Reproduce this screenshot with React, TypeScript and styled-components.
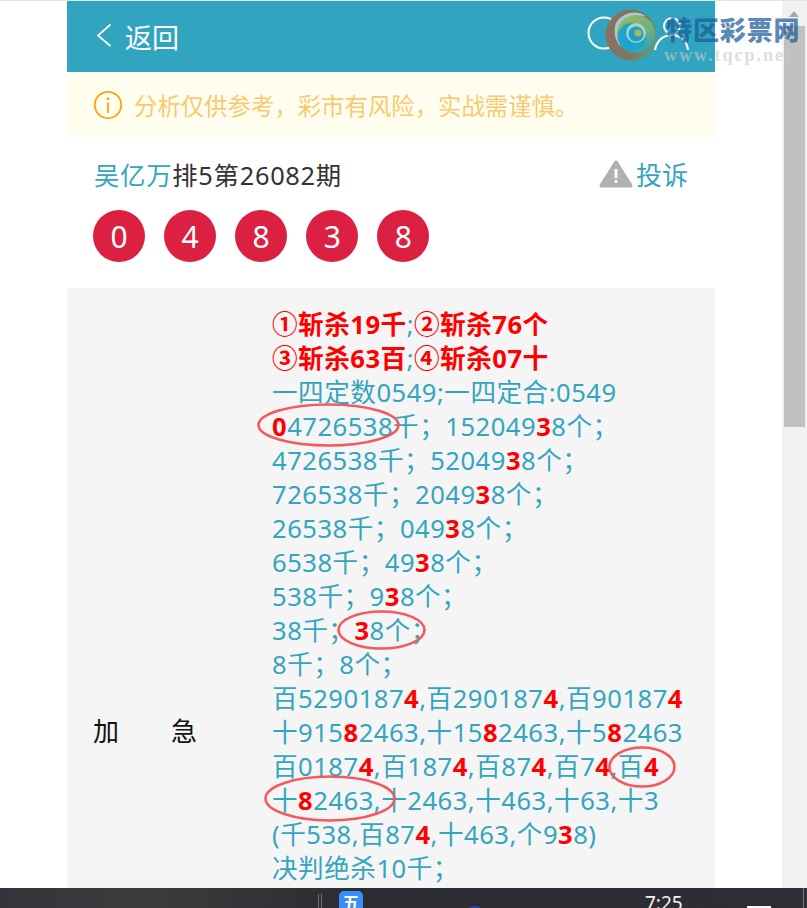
import React from "react";
import styled, { createGlobalStyle } from "styled-components";

const GlobalStyle = createGlobalStyle`
  html, body {
    margin: 0;
    padding: 0;
    background: #fff;
    overflow: hidden;
  }
  * {
    box-sizing: border-box;
  }
`;

const Screen = styled.div`
  position: relative;
  width: 807px;
  height: 908px;
  display: flex;
  flex-direction: column;
  overflow: hidden;
  font-family: "Noto Sans", "Noto Sans CJK SC", sans-serif;
  background: #fff;
`;

const Viewport = styled.div`
  flex: 1;
  min-height: 0;
  display: flex;
  justify-content: space-between;
  padding-left: 67px;
  border-top: 1px solid #e4e4e4;
`;

const Page = styled.main`
  width: 648px;
  display: flex;
  flex-direction: column;
`;

const Header = styled.header`
  height: 71px;
  flex: none;
  display: flex;
  align-items: center;
  background: #31a5bf;
  color: #fff;
  padding: 0 0 0 29px;
`;

const BackLink = styled.a`
  display: flex;
  align-items: center;
  gap: 13px;
  font-size: 27px;
  color: #fff;
`;

const BackGlyph = styled.svg`
  margin-top: -3px;
`;

const HeaderIcons = styled.svg`
  margin-left: auto;
  margin-right: 26px;
`;

const Notice = styled.div`
  height: 65px;
  flex: none;
  display: flex;
  align-items: center;
  gap: 11px;
  padding-left: 26px;
  background: #fffeee;
  color: #fbc872;
  font-size: 23.4px;
`;

const TitleRow = styled.div`
  display: flex;
  align-items: center;
  justify-content: space-between;
  height: 76px;
  flex: none;
  padding: 0 27px 3px 27px;
  font-size: 25.4px;
  letter-spacing: 0.7px;
  color: #333;
`;

const Author = styled.span`
  color: #34a5be;
`;

const Complaint = styled.a`
  display: flex;
  align-items: center;
  gap: 3px;
  color: #34a5be;
  font-size: 26px;
  letter-spacing: 0;
`;

const Balls = styled.div`
  display: flex;
  gap: 19.1px;
  padding-left: 26px;
  margin-top: -3px;
  flex: none;
`;

const Ball = styled.span`
  width: 52px;
  height: 52px;
  border-radius: 50%;
  display: flex;
  align-items: center;
  justify-content: center;
  background: #db2042;
  color: #fff;
  font-size: 30px;
`;

const Panel = styled.section`
  flex: none;
  height: 888px;
  margin-top: 26px;
  display: flex;
  align-items: center;
  background: #f5f5f5;
  padding-left: 26px;
`;

const Label = styled.div`
  width: 179px;
  flex: none;
  margin-top: -4px;
  font-size: 26px;
  color: #111;
  white-space: pre;
`;

const Lines = styled.div`
  align-self: flex-start;
  padding-top: 20px;
  font-size: 25.6px;
  letter-spacing: 0.5px;
  line-height: 34px;
  color: #34a5be;
`;

const Line = styled.div`
  white-space: nowrap;
`;

const Hot = styled.b`
  color: #f00;
  font-weight: 700;
`;

const Scrollbar = styled.div`
  width: 25px;
  flex: none;
  position: relative;
  background: #f1f1f1;
  padding: 25px 2px 0;
`;

const ScrollArrow = styled.span`
  position: absolute;
  left: 7px;
  top: 10px;
  border-left: 5.5px solid transparent;
  border-right: 5.5px solid transparent;
  border-bottom: 6px solid #a8a8a8;
`;

const ScrollThumb = styled.div`
  height: 401px;
  background: #c1c1c1;
`;

const Taskbar = styled.footer`
  position: relative;
  height: 20px;
  flex: none;
  display: flex;
  overflow: hidden;
  background: linear-gradient(90deg, #33353a 0%, #3a3c3d 18%, #2b2c31 45%, #2e2f34 100%);
  color: #fff;
  font-size: 19px;
`;

const TrayDivider = styled.span`
  width: 4px;
  height: 14px;
  margin: 6px 0 0 318px;
  border-left: 1px solid #6d6e72;
  border-right: 1px solid #6d6e72;
`;

const AppTile = styled.span`
  width: 24px;
  height: 24px;
  margin: 3px 0 0 17px;
  border-radius: 5px;
  background: #3a8cfa;
  color: #fff;
  font-size: 17px;
  font-weight: 700;
  line-height: 24px;
  text-align: center;
`;

const TrayDot = styled.span`
  width: 20px;
  height: 20px;
  margin: 18px 0 0 102px;
  border-radius: 50%;
  background: #1b45c8;
`;

const Clock = styled.span`
  margin: 3px 0 0 160px;
  line-height: 24px;
  color: #f3f3f3;
`;

const TrayBox = styled.span`
  width: 24px;
  height: 10px;
  margin: 18px 0 0 64px;
  background: #f5f5f5;
`;

const TrayEdge = styled.span`
  width: 1px;
  margin-left: auto;
  margin-right: 3px;
  background: #77787c;
`;

const Watermark = styled.div`
  position: absolute;
  left: 605px;
  top: 9px;
  display: flex;
  pointer-events: none;
`;

const WatermarkText = styled.div`
  margin: 5px 0 0 9px;
  font-family: "Noto Sans CJK SC", sans-serif;
`;

const WatermarkTitle = styled.div`
  font-size: 26px;
  line-height: 30px;
  font-weight: 900;
  letter-spacing: 0.9px;
  color: rgba(26, 92, 150, 0.72);
`;

const WatermarkUrl = styled.div`
  margin: 1px 0 0 -2px;
  font-family: "Liberation Serif", serif;
  font-size: 18px;
  line-height: 20px;
  font-weight: 700;
  letter-spacing: 2px;
  color: rgba(200, 200, 200, 0.62);
`;

const Mark = styled.svg<{ $left: number; $top: number }>`
  position: absolute;
  left: ${(p) => p.$left}px;
  top: ${(p) => p.$top}px;
  pointer-events: none;
`;

const Ellipse = ({ left, top, w, h }: { left: number; top: number; w: number; h: number }) => (
  <Mark $left={left} $top={top} width={w} height={h} viewBox={`0 0 ${w} ${h}`}>
    <ellipse cx={w / 2} cy={h / 2} rx={w / 2 - 1.5} ry={h / 2 - 1.5} fill="none" stroke="#f25a5f" strokeWidth="2.6" />
  </Mark>
);

const Swirl = () => (
  <svg width="52" height="52" viewBox="0 0 52 52">
    <defs>
      <linearGradient id="base" x1="0" y1="0.3" x2="1" y2="0.7">
        <stop offset="0" stopColor="#8f6f64" />
        <stop offset="0.6" stopColor="#7b7662" />
        <stop offset="1" stopColor="#6f9a5c" />
      </linearGradient>
      <linearGradient id="band" x1="0.3" y1="0" x2="0.7" y2="1">
        <stop offset="0" stopColor="#94b95a" />
        <stop offset="0.55" stopColor="#6cae86" />
        <stop offset="1" stopColor="#2f9fc0" />
      </linearGradient>
    </defs>
    <circle cx="26" cy="26" r="25.5" fill="url(#base)" />
    <path d="M11 14C18 3 32 0 42 8 36 5 24 7 18 16 14 22 13 30 16 38 10 32 8 22 11 14Z" fill="#a4ccd0" />
    <circle cx="31" cy="25" r="19" fill="url(#band)" />
    <circle cx="27" cy="28" r="14" fill="#1ca3cf" />
    <circle cx="31" cy="24" r="10" fill="#a8d0b8" />
    <circle cx="31" cy="25" r="7.5" fill="#1f9fca" />
    <circle cx="33" cy="24" r="3.6" fill="#a9b85a" />
  </svg>
);

export default function App() {
  return (
    <Screen>
      <GlobalStyle />
      <Viewport>
        <Page>
          <Header>
            <BackLink>
              <BackGlyph width="16" height="24" viewBox="0 0 16 24">
                <path d="M14.5 1.5 2 12.5 14.5 23" fill="none" stroke="#fff" strokeWidth="1.7" />
              </BackGlyph>
              返回
            </BackLink>
            <HeaderIcons width="102" height="50" viewBox="0 0 102 50">
              <circle cx="17" cy="21" r="15.5" fill="none" stroke="#fff" strokeWidth="2" />
              <circle cx="85" cy="14" r="8" fill="none" stroke="#fff" strokeWidth="2" />
              <path d="M68 38C70 27 78 23 85 23 93 23 100 29 101 38" fill="none" stroke="#fff" strokeWidth="2" />
            </HeaderIcons>
          </Header>
          <Notice>
            <svg width="30" height="30" viewBox="0 0 30 30">
              <circle cx="15" cy="15" r="13.2" fill="none" stroke="#faa60f" strokeWidth="1.8" />
              <circle cx="15" cy="8.8" r="1.4" fill="#faa60f" />
              <rect x="14.1" y="12.5" width="1.8" height="10.5" fill="#faa60f" />
            </svg>
            分析仅供参考，彩市有风险，实战需谨慎。
          </Notice>
          <TitleRow>
            <span>
              <Author>吴亿万</Author>排5第26082期
            </span>
            <Complaint>
              <svg width="34" height="28" viewBox="0 0 34 28">
                <path d="M17 2.5 31.5 25.5H2.5Z" fill="#b1b1b1" stroke="#b1b1b1" strokeWidth="4" strokeLinejoin="round" />
                <rect x="15.6" y="9" width="2.8" height="9" fill="#fff" />
                <rect x="15.6" y="20" width="2.8" height="2.8" fill="#fff" />
              </svg>
              投诉
            </Complaint>
          </TitleRow>
          <Balls>
            {["0", "4", "8", "3", "8"].map((n, i) => (
              <Ball key={i}>{n}</Ball>
            ))}
          </Balls>
          <Panel>
            <Label>加　　急</Label>
            <Lines>
              <Line>
                <Hot>①斩杀19千</Hot>;<Hot>②斩杀76个</Hot>
              </Line>
              <Line>
                <Hot>③斩杀63百</Hot>;<Hot>④斩杀07十</Hot>
              </Line>
              <Line>一四定数0549;一四定合:0549</Line>
              <Line>
                <Hot>0</Hot>4726538千；152049<Hot>3</Hot>8个；
              </Line>
              <Line>
                4726538千；52049<Hot>3</Hot>8个；
              </Line>
              <Line>
                726538千；2049<Hot>3</Hot>8个；
              </Line>
              <Line>
                26538千；049<Hot>3</Hot>8个；
              </Line>
              <Line>
                6538千；49<Hot>3</Hot>8个；
              </Line>
              <Line>
                538千；9<Hot>3</Hot>8个；
              </Line>
              <Line>
                38千；<Hot>3</Hot>8个；
              </Line>
              <Line>8千；8个；</Line>
              <Line>
                百5290187<Hot>4</Hot>,百290187<Hot>4</Hot>,百90187<Hot>4</Hot>
              </Line>
              <Line>
                十915<Hot>8</Hot>2463,十15<Hot>8</Hot>2463,十5<Hot>8</Hot>2463
              </Line>
              <Line>
                百0187<Hot>4</Hot>,百187<Hot>4</Hot>,百87<Hot>4</Hot>,百7<Hot>4</Hot>,百<Hot>4</Hot>
              </Line>
              <Line>
                十<Hot>8</Hot>2463,十2463,十463,十63,十3
              </Line>
              <Line>
                (千538,百87<Hot>4</Hot>,十463,个9<Hot>3</Hot>8)
              </Line>
              <Line>决判绝杀10千；</Line>
            </Lines>
          </Panel>
        </Page>
        <Scrollbar>
          <ScrollArrow />
          <ScrollThumb />
        </Scrollbar>
      </Viewport>
      <Taskbar>
        <TrayDivider />
        <AppTile>五</AppTile>
        <TrayDot />
        <Clock>7:25</Clock>
        <TrayBox />
        <TrayEdge />
      </Taskbar>
      <Ellipse left={257} top={403} w={143} h={44} />
      <Ellipse left={337} top={610} w={89} h={40} />
      <Ellipse left={608} top={746} w={68} h={42} />
      <Ellipse left={264} top={775} w={132} h={47} />
      <Watermark>
        <Swirl />
        <WatermarkText>
          <WatermarkTitle>特区彩票网</WatermarkTitle>
          <WatermarkUrl>www.tqcp.net</WatermarkUrl>
        </WatermarkText>
      </Watermark>
    </Screen>
  );
}
